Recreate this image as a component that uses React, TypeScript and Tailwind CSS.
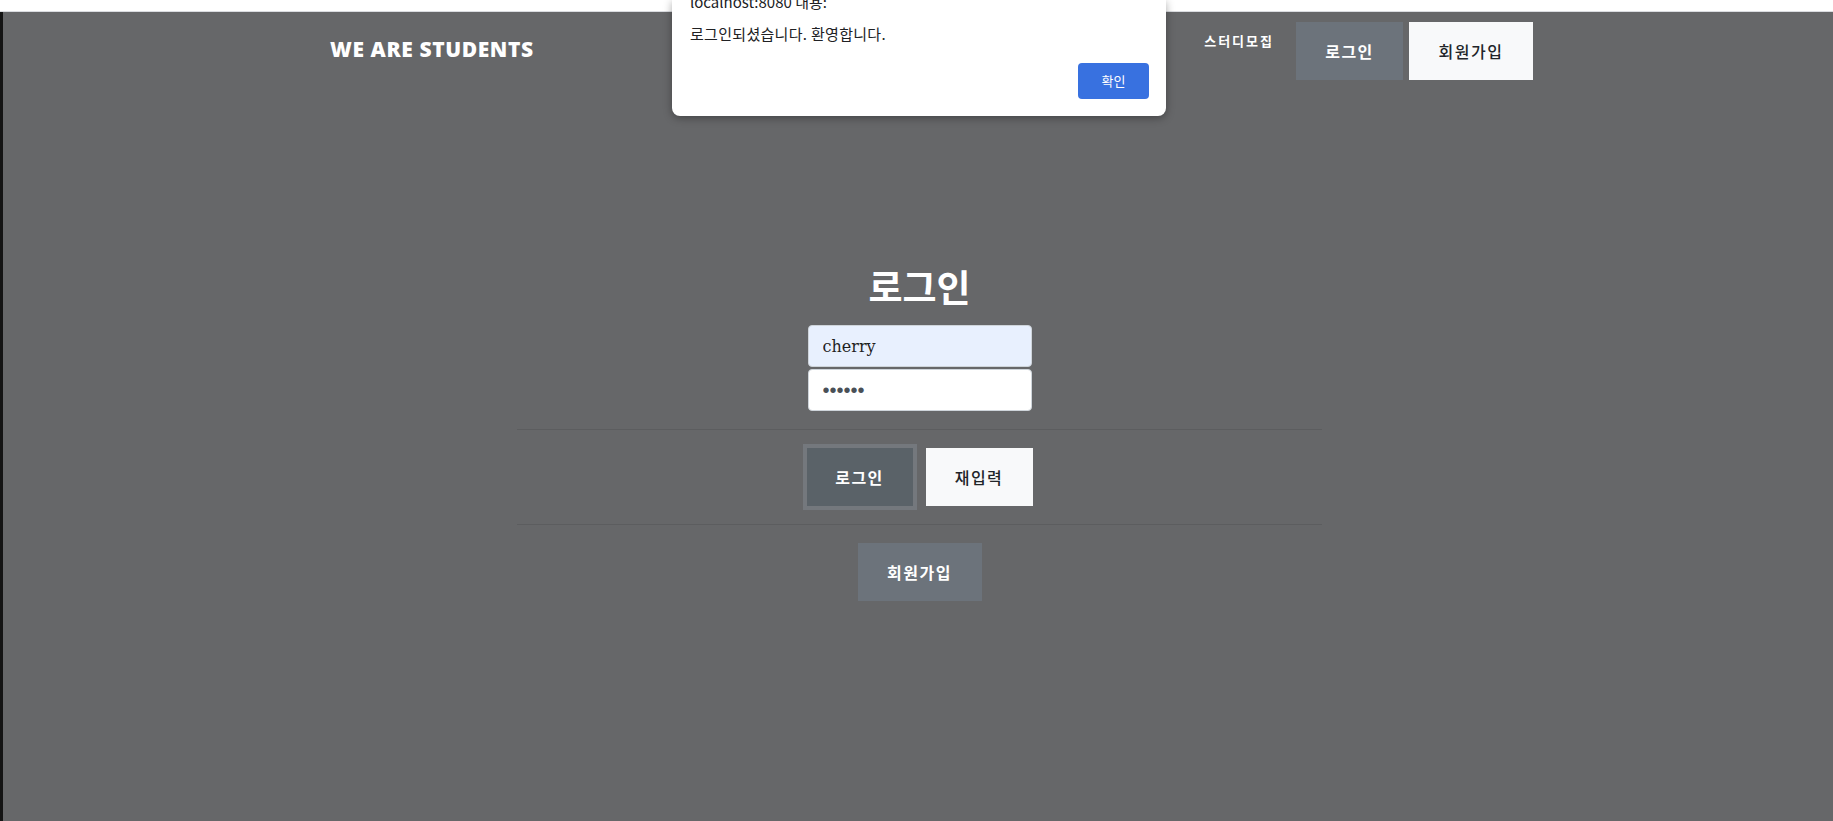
import React from 'react'

const kr = "font-['Noto_Sans_CJK_KR','Noto_Sans',sans-serif]"

const Nav: React.FC = () => {
  return (
    <div className="ml-[327px] w-[1203px] pt-[10px] flex justify-between items-start">
      <div className="mt-[17px] text-white text-[21px] leading-[21px] font-extrabold tracking-[0.6px] font-['Open_Sans',sans-serif]">
        WE ARE STUDENTS
      </div>
      <div className="flex items-start">
        <a className={`${kr} mt-[12px] text-white text-[13px] leading-[13px] font-bold tracking-[2px]`}>스터디모집</a>
        <button className={`${kr} ml-[22px] w-[107px] h-[58px] bg-[#6c737b] text-white text-[16px] font-bold tracking-[1.5px]`}>
          로그인
        </button>
        <button className={`${kr} ml-[6px] w-[124px] h-[58px] bg-[#f8f9fa] text-[#212529] text-[16px] font-medium tracking-[1.5px]`}>
          회원가입
        </button>
      </div>
    </div>
  )
}

const LoginForm: React.FC = () => {
  return (
    <div className="flex flex-col items-center pl-[3px]">
      <h1 className={`${kr} mt-[184px] text-white text-[37px] leading-[44px] font-bold`}>로그인</h1>
      <div className="mt-[17px] flex flex-col gap-[2px]">
        <input
          readOnly
          value="cherry"
          className="w-[224px] h-[42px] px-[14px] rounded-[4px] border border-[#ced4da] bg-[#e8f0fe] text-[#1f1f1f] text-[16px] font-['DejaVu_Serif',serif] outline-none"
        />
        <input
          readOnly
          type="password"
          value="123456"
          className="w-[224px] h-[42px] px-[14px] rounded-[4px] border border-[#ced4da] bg-white text-[#495057] text-[20px] font-['Liberation_Sans',sans-serif] outline-none"
        />
      </div>
      <hr className="mt-[18px] w-[805px] border-0 border-t border-[#5c5d5f]" />
      <div className="mt-[18px] flex gap-[13px]">
        <button className={`${kr} w-[106px] h-[58px] bg-[#5a6268] shadow-[0_0_0_4px_#74787d] text-white text-[16px] font-bold tracking-[1.5px]`}>
          로그인
        </button>
        <button className={`${kr} w-[107px] h-[58px] bg-[#f8f9fa] text-[#212529] text-[16px] font-medium tracking-[1.5px]`}>
          재입력
        </button>
      </div>
      <hr className="mt-[18px] w-[805px] border-0 border-t border-[#5c5d5f]" />
      <button className={`${kr} mt-[18px] w-[124px] h-[58px] bg-[#6c737b] text-white text-[16px] font-bold tracking-[1.5px]`}>
        회원가입
      </button>
    </div>
  )
}

const AlertBox: React.FC = () => {
  return (
    <div className={`${kr} absolute left-[672px] top-0 w-[494px] h-[116px] bg-white rounded-b-[8px] shadow-[0_2px_8px_rgba(0,0,0,0.35)] overflow-hidden pl-[18px] pr-[17px] flex flex-col`}>
      <div className="-mt-[8px] text-[15px] leading-[20px] text-[#202124]">localhost:8080 내용:</div>
      <div className="mt-[12px] text-[15px] leading-[19px] tracking-[0.3px] text-[#202124]">로그인되셨습니다. 환영합니다.</div>
      <div className="mt-[20px] flex justify-end">
        <button className="w-[71px] h-[36px] rounded-[4px] bg-[#3871e0] text-white text-[13px]">확인</button>
      </div>
    </div>
  )
}

const App: React.FC = () => {
  return (
    <div className="relative h-screen w-full flex flex-col bg-[#666769] overflow-hidden">
      <div className="h-[12px] bg-white border-b border-[#dadce0]" />
      <div className="flex flex-1">
        <div className="w-[3px] bg-[#141414]" />
        <div className="flex-1">
          <Nav />
          <LoginForm />
        </div>
      </div>
      <AlertBox />
    </div>
  )
}

export default App
